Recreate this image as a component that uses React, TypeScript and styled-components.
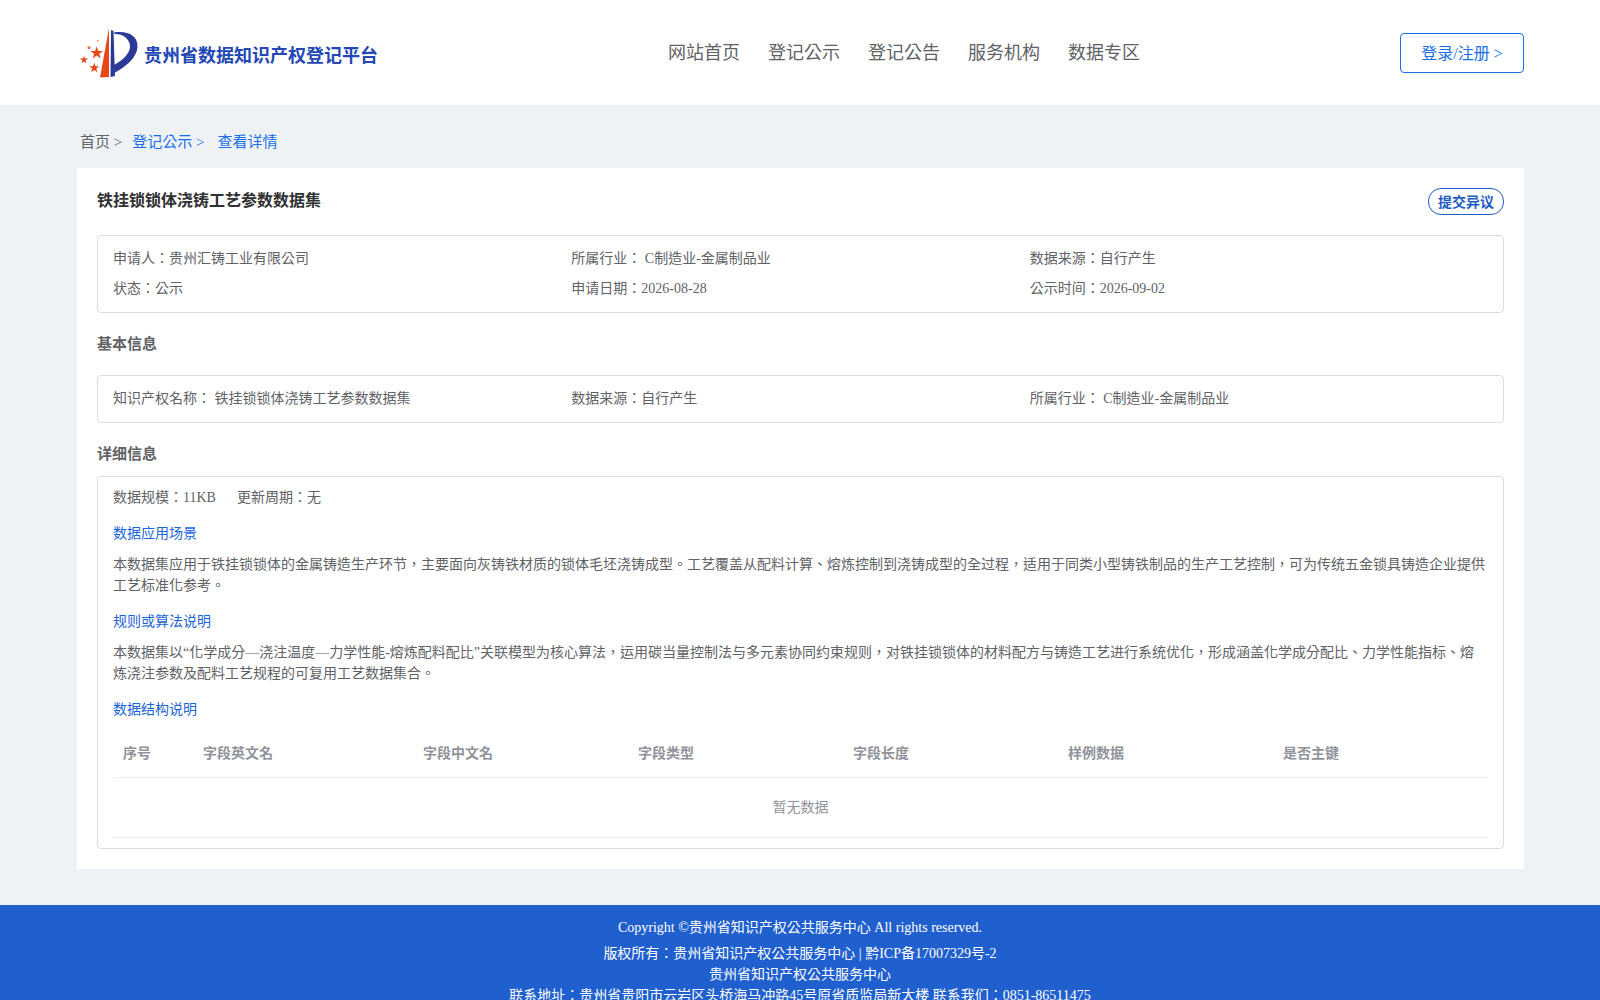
import React from 'react';
import styled, { createGlobalStyle } from 'styled-components';

const GlobalStyle = createGlobalStyle`
  html, body {
    margin: 0;
    padding: 0;
    background: #eff2f5;
    font-family: "Liberation Serif", "Noto Sans CJK TC", serif;
    font-size: 14px;
    color: #606266;
  }
  * { box-sizing: border-box; }
`;

const columns = ['序号', '字段英文名', '字段中文名', '字段类型', '字段长度', '样例数据', '是否主键'];
const navItems = ['网站首页', '登记公示', '登记公告', '服务机构', '数据专区'];

function Logo() {
  return (
    <LogoSvg viewBox="2 0 67 65">
      <path d="M34 8 L34 57 L25 57.5 Z" fill="#e8471a" />
      <path d="M36 10 L38.5 11 L40 56 L35.5 57 Z" fill="#2b3a96" />
      <path d="M39 12.5 C52 10.5 63 15 62.5 27 C62 38 50 47 39.5 53 L39 45 C48 40 55.5 33 55 26 C54.5 18 47 13.5 39.5 14 Z" fill="#2b3a96" />
      <polygon points="21.7,26.5 23.3,31 28,31 24.2,33.8 25.7,38.5 21.7,35.6 17.7,38.5 19.2,33.8 15.4,31 20.1,31" fill="#e8471a" />
      <polygon points="9,35.8 10,38.6 13,38.6 10.6,40.4 11.5,43.3 9,41.6 6.5,43.3 7.4,40.4 5,38.6 8,38.6" fill="#e8471a" />
      <polygon points="19.3,42.8 20.6,46.3 24.3,46.3 21.3,48.5 22.4,52.2 19.3,50 16.2,52.2 17.3,48.5 14.3,46.3 18,46.3" fill="#e8471a" />
      <circle cx="14" cy="27.7" r="1.6" fill="#ee7a50" />
      <circle cx="22.7" cy="20.7" r="1" fill="#ee9070" />
    </LogoSvg>
  );
}

export default function App() {
  return (
    <>
      <GlobalStyle />
      <Header>
        <Brand>
          <Logo />
          <BrandName>贵州省数据知识产权登记平台</BrandName>
        </Brand>
        <Nav>
          {navItems.map(item => <NavLink key={item}>{item}</NavLink>)}
        </Nav>
        <LoginButton>登录/注册 &gt;</LoginButton>
      </Header>

      <Main>
        <Breadcrumb>
          <Crumb>首页 &gt;</Crumb>
          <Crumb $active>登记公示 &gt;</Crumb>
          <Crumb $active>查看详情</Crumb>
        </Breadcrumb>

        <Card>
          <TitleRow>
            <Title>铁挂锁锁体浇铸工艺参数数据集</Title>
            <ObjectionButton>提交异议</ObjectionButton>
          </TitleRow>

          <InfoBox>
            <InfoCell>申请人：贵州汇铸工业有限公司</InfoCell>
            <InfoCell>所属行业： C制造业-金属制品业</InfoCell>
            <InfoCell>数据来源：自行产生</InfoCell>
            <InfoCell>状态：公示</InfoCell>
            <InfoCell>申请日期：2026-08-28</InfoCell>
            <InfoCell>公示时间：2026-09-02</InfoCell>
          </InfoBox>

          <SectionTitle>基本信息</SectionTitle>
          <InfoBox>
            <InfoCell>知识产权名称： 铁挂锁锁体浇铸工艺参数数据集</InfoCell>
            <InfoCell>数据来源：自行产生</InfoCell>
            <InfoCell>所属行业： C制造业-金属制品业</InfoCell>
          </InfoBox>

          <SectionTitle $tight>详细信息</SectionTitle>
          <DetailBox>
            <ScaleRow>
              <span>数据规模：11KB</span>
              <span>更新周期：无</span>
            </ScaleRow>
            <SubTitle>数据应用场景</SubTitle>
            <Paragraph>本数据集应用于铁挂锁锁体的金属铸造生产环节，主要面向灰铸铁材质的锁体毛坯浇铸成型。工艺覆盖从配料计算、熔炼控制到浇铸成型的全过程，适用于同类小型铸铁制品的生产工艺控制，可为传统五金锁具铸造企业提供工艺标准化参考。</Paragraph>
            <SubTitle>规则或算法说明</SubTitle>
            <Paragraph>本数据集以“化学成分—浇注温度—力学性能-熔炼配料配比”关联模型为核心算法，运用碳当量控制法与多元素协同约束规则，对铁挂锁锁体的材料配方与铸造工艺进行系统优化，形成涵盖化学成分配比、力学性能指标、熔炼浇注参数及配料工艺规程的可复用工艺数据集合。</Paragraph>
            <SubTitle>数据结构说明</SubTitle>
            <FieldTable>
              <thead>
                <tr>
                  {columns.map(col => <HeadCell key={col}>{col}</HeadCell>)}
                </tr>
              </thead>
              <tbody>
                <tr>
                  <EmptyCell colSpan={columns.length}>暂无数据</EmptyCell>
                </tr>
              </tbody>
            </FieldTable>
          </DetailBox>
        </Card>
      </Main>

      <Footer>
        <Copyright>Copyright ©贵州省知识产权公共服务中心 All rights reserved.</Copyright>
        <FooterLine>版权所有：贵州省知识产权公共服务中心 | 黔ICP备17007329号-2</FooterLine>
        <FooterLine>贵州省知识产权公共服务中心</FooterLine>
        <FooterLine>联系地址：贵州省贵阳市云岩区头桥海马冲路45号原省质监局新大楼 联系我们：0851-86511475</FooterLine>
      </Footer>
    </>
  );
}

const Header = styled.header`
  display: flex;
  align-items: center;
  height: 105px;
  padding: 0 76px 0 77px;
  background: #fff;
`;

const Brand = styled.div`
  display: flex;
  align-items: center;
  width: 591px;
`;

const LogoSvg = styled.svg`
  width: 67px;
  height: 65px;
  flex: none;
`;

const BrandName = styled.div`
  margin-top: 3px;
  font-size: 18px;
  font-weight: 700;
  color: #2347b5;
`;

const Nav = styled.nav`
  display: flex;
  gap: 28px;
  margin-bottom: 4px;
`;

const NavLink = styled.a`
  font-size: 18px;
  color: #606266;
`;

const LoginButton = styled.button`
  width: 124px;
  height: 40px;
  margin-left: auto;
  padding: 0 0 2px;
  border: 1px solid #1a6fe8;
  border-radius: 4px;
  background: #fff;
  font: inherit;
  font-size: 16px;
  color: #1a6fe8;
`;

const Main = styled.main`
  padding: 0 76px 36px 77px;
`;

const Breadcrumb = styled.div`
  display: flex;
  gap: 10px;
  height: 63px;
  padding: 26px 3px 0;
  font-size: 15px;
  line-height: 22px;
`;

const Crumb = styled.span<{ $active?: boolean }>`
  margin-right: ${props => props.$active ? '3px' : '0'};
  color: ${props => props.$active ? '#1a6fe8' : '#606266'};
`;

const Card = styled.section`
  height: 701px;
  padding: 20px;
  background: #fff;
`;

const TitleRow = styled.div`
  display: flex;
  justify-content: space-between;
  align-items: flex-start;
  height: 47px;
`;

const Title = styled.h1`
  margin: 0;
  font-size: 16px;
  font-weight: 700;
  line-height: 26px;
  color: #303133;
`;

const ObjectionButton = styled.button`
  width: 76px;
  height: 27px;
  padding: 0 0 2px;
  border: 1px solid #1d5bc4;
  border-radius: 13px;
  background: #fff;
  font: inherit;
  font-size: 14px;
  font-weight: 700;
  color: #1d5bc4;
`;

const InfoBox = styled.div`
  display: grid;
  grid-template-columns: repeat(3, 1fr);
  row-gap: 9px;
  padding: 12px 15px 13px;
  border: 1px solid #ddd;
  border-radius: 4px;
  line-height: 21px;
`;

const InfoCell = styled.div`
  color: #606266;
`;

const SectionTitle = styled.h2<{ $tight?: boolean }>`
  margin: 0;
  height: ${props => props.$tight ? '53px' : '62px'};
  padding-top: 20px;
  font-size: 15px;
  font-weight: 700;
  line-height: 22px;
  color: #606266;
`;

const DetailBox = styled.div`
  padding: 10px 15px;
  border: 1px solid #ddd;
  border-radius: 4px;
`;

const ScaleRow = styled.div`
  display: flex;
  gap: 21px;
  line-height: 21px;
`;

const SubTitle = styled.div`
  margin-top: 15px;
  line-height: 22px;
  color: #1c64d8;
`;

const Paragraph = styled.p`
  margin: 9px 0 0;
  line-height: 21px;
`;

const FieldTable = styled.table`
  width: 100%;
  margin-top: 8px;
  border-collapse: collapse;
  table-layout: fixed;
`;

const HeadCell = styled.th`
  width: 215px;
  height: 48px;
  padding: 0 10px 2px;
  border-bottom: 1px solid #ebeef5;
  font-weight: 700;
  text-align: left;
  color: #909399;

  &:first-child { width: 80px; }
  &:nth-child(2) { width: 220px; }
`;

const EmptyCell = styled.td`
  height: 60px;
  padding: 0 0 2px;
  border-bottom: 1px solid #ebeef5;
  text-align: center;
  color: #909399;
`;

const Footer = styled.footer`
  padding: 12px 0 8px;
  background: #205fce;
  text-align: center;
  color: #fff;
  line-height: 21px;
`;

const Copyright = styled.div`
  margin-bottom: 5px;
`;

const FooterLine = styled.div``;
